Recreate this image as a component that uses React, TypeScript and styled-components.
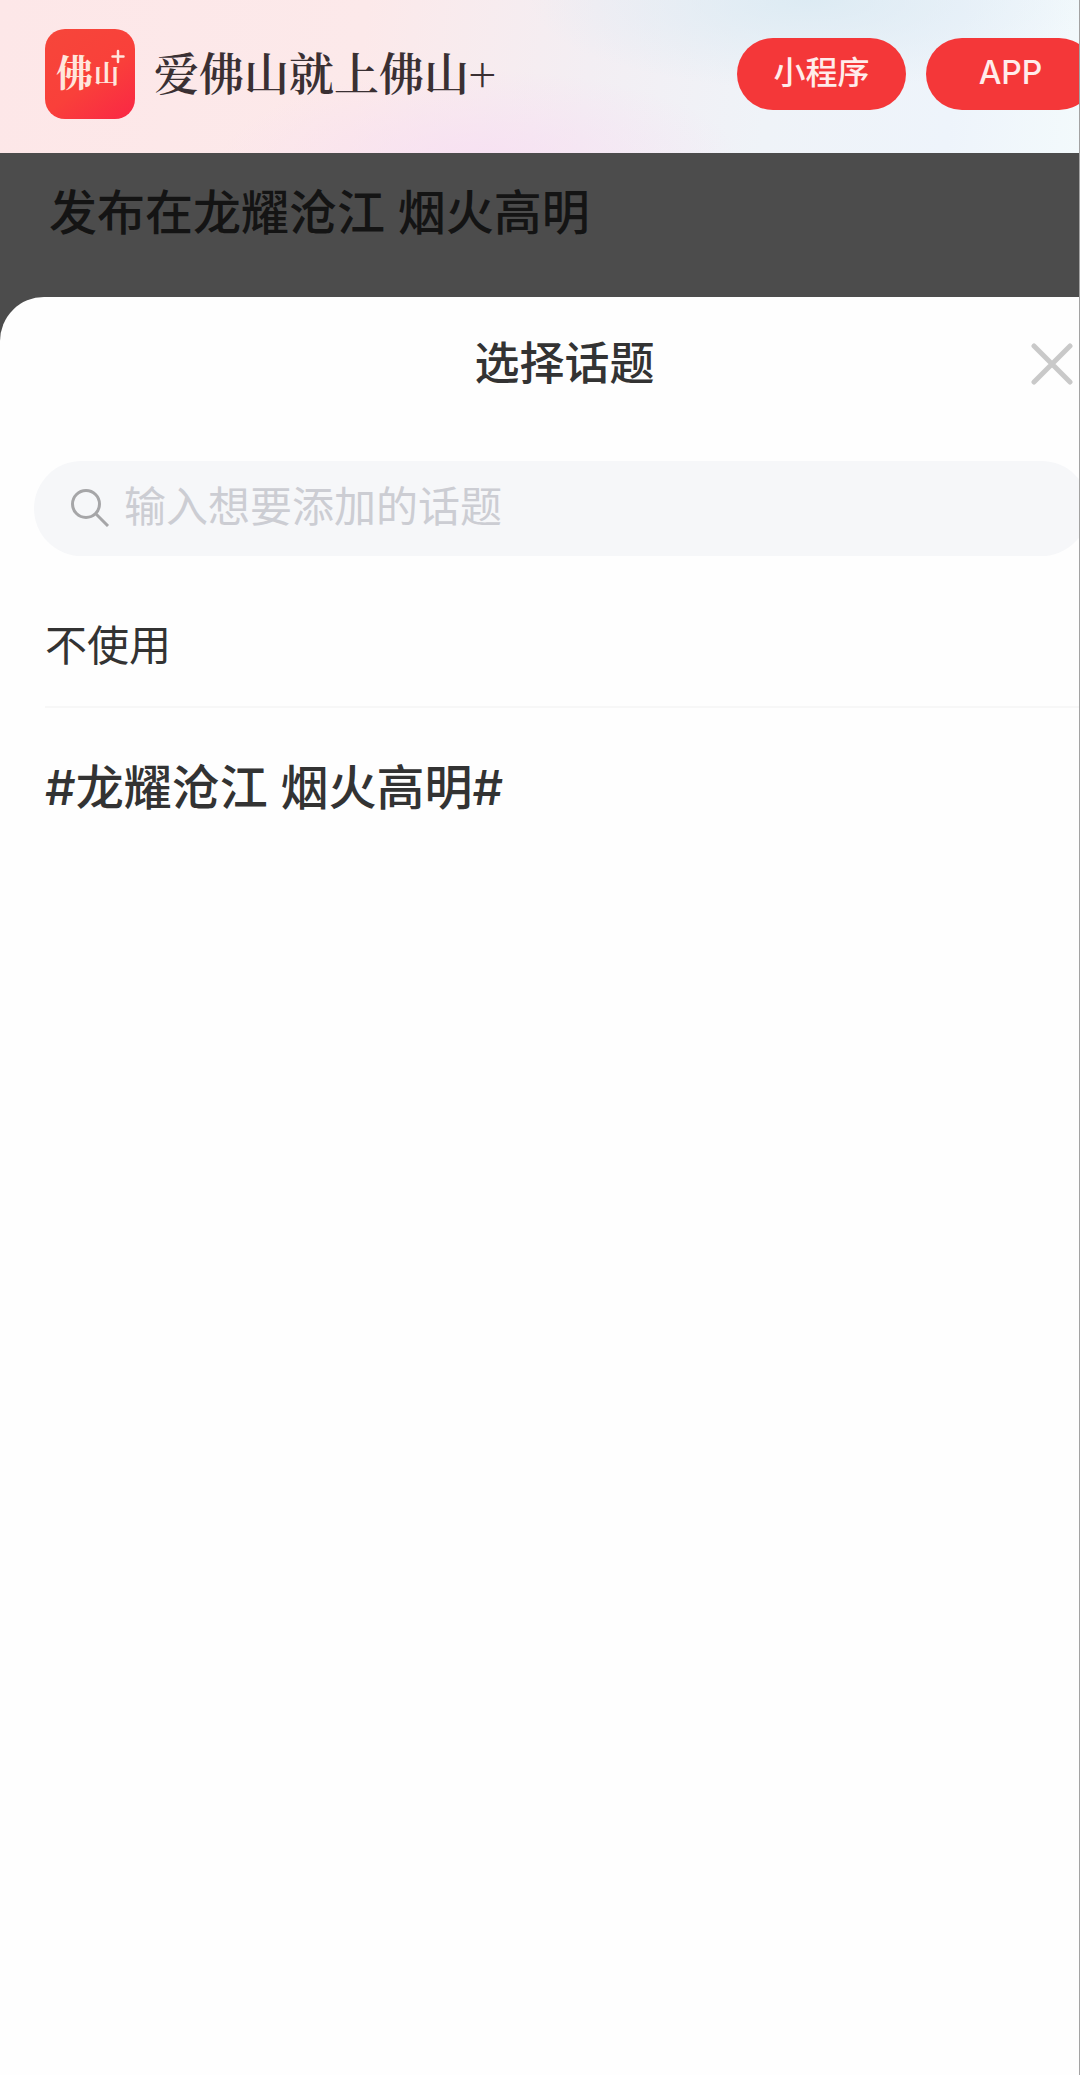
import React from "react";
import styled, { createGlobalStyle } from "styled-components";

const GlobalStyle = createGlobalStyle`
  *, *::before, *::after { box-sizing: border-box; }
  html, body { margin: 0; background: #fefefe; }
  body {
    font-family: Inter, "Noto Sans CJK SC", "Noto Sans", sans-serif;
    color: #333333;
  }
  button, input { font: inherit; }
`;

const Screen = styled.div`
  display: flex;
  flex-direction: column;
  min-height: 100vh;
  overflow: hidden;
  border-right: 1px solid #a3a3a3;
  background: #4c4c4c;
`;

/* The page is slightly wider than the visible screen and runs off its right side. */
const Page = styled.div`
  display: flex;
  flex-direction: column;
  flex: 1;
  width: calc(100% + 50px);
`;

const Banner = styled.header`
  display: flex;
  align-items: center;
  height: 153px;
  padding: 0 34px 6px 45px;
  background:
    radial-gradient(ellipse 260px 90px at 480px 160px, rgba(247, 222, 243, 0.8), rgba(247, 222, 243, 0) 100%),
    radial-gradient(ellipse 280px 90px at 810px 0, rgba(219, 234, 243, 0.9), rgba(219, 234, 243, 0) 100%),
    linear-gradient(97deg, #fde7e8 0%, #fce9ea 32%, #f3eef3 52%, #eff3f8 68%, #eef4fb 84%, #f3fafc 96%);
`;

const AppLogo = styled.span`
  display: flex;
  align-items: center;
  justify-content: center;
  width: 90px;
  height: 90px;
  border-radius: 20px;
  background: linear-gradient(145deg, #f6463a 0%, #f9403a 55%, #fa2645 100%);
`;

const Slogan = styled.span`
  margin-left: 19px;
  padding-bottom: 4px;
  font-family: "Noto Serif CJK SC", "Source Han Serif SC", "Liberation Serif", "Noto Sans CJK SC", serif;
  font-size: 45px;
  font-weight: 600;
  line-height: 64px;
  white-space: nowrap;
  color: #3a3033;
`;

const BannerActions = styled.div`
  display: flex;
  gap: 20px;
  margin-left: auto;
`;

const PillButton = styled.button`
  width: 169px;
  height: 72px;
  padding: 0 0 2px;
  border: 0;
  border-radius: 36px;
  background: #f43739;
  color: #ffeceb;
  font-size: 32px;
  font-weight: 500;
  line-height: 48px;
`;

const PublishTarget = styled.p`
  margin: 0;
  padding: 24px 49px 48px;
  font-size: 48px;
  font-weight: 500;
  line-height: 72px;
  color: #141414;
`;

const Sheet = styled.section`
  flex: 1;
  border-radius: 44px 44px 0 0;
  background: #fefefe;
`;

const SheetHeader = styled.div`
  display: grid;
  grid-template-columns: 1fr auto 1fr;
  align-items: center;
  height: 134px;
  padding: 0 54px;
`;

const SheetTitle = styled.h1`
  grid-column: 2;
  margin: 0;
  font-size: 45px;
  font-weight: 500;
  line-height: 64px;
`;

const CloseButton = styled.button`
  display: flex;
  justify-self: end;
  padding: 0;
  border: 0;
  background: none;
`;

const SearchBox = styled.label`
  display: flex;
  align-items: center;
  gap: 14px;
  height: 95px;
  margin: 30px 40px 0 34px;
  padding: 0 36px 4px;
  border-radius: 48px;
  background: #f6f7f9;
`;

const SearchInput = styled.input`
  flex: 1;
  min-width: 0;
  height: 64px;
  padding: 0;
  border: 0;
  outline: 0;
  background: none;
  color: #333333;
  font-size: 42px;
  line-height: 64px;

  &::placeholder {
    color: #cccdd3;
    opacity: 1;
  }
`;

const TopicList = styled.ul`
  margin: 0;
  padding: 28px 45px 0;
  list-style: none;
`;

const TopicItem = styled.li`
  & + & {
    border-top: 2px solid #f7f7f7;
  }
`;

const TopicButton = styled.button<{ $strong?: boolean }>`
  display: block;
  width: 100%;
  padding: ${(p) => (p.$strong ? "44px 0" : "30px 0 28px")};
  border: 0;
  background: none;
  color: #333333;
  font-size: ${(p) => (p.$strong ? "48px" : "42px")};
  font-weight: ${(p) => (p.$strong ? 500 : 400)};
  line-height: ${(p) => (p.$strong ? "72px" : "64px")};
  text-align: left;
`;

const topics = [
  { label: "不使用", strong: false },
  { label: "#龙耀沧江 烟火高明#", strong: true },
];

function LogoMark() {
  return (
    <svg width="90" height="90" viewBox="0 0 90 90" role="img" aria-label="佛山+">
      <g fill="#ffe6dc" fontFamily='"Noto Serif CJK SC", "Noto Sans CJK SC", sans-serif' fontWeight="700">
        <text x="11" y="58" fontSize="37">佛</text>
        <text x="49" y="54" fontSize="25">山</text>
      </g>
      <path d="M73 22v11M67.500 27.500h11" stroke="#ffe6dc" strokeWidth="2.500" strokeLinecap="round" />
    </svg>
  );
}

function SearchIcon() {
  return (
    <svg width="40" height="40" viewBox="0 0 40 40" fill="none" stroke="#a6a6a8" strokeWidth="3" aria-hidden="true">
      <circle cx="16" cy="17" r="13.500" />
      <path d="M25.500 26.500L38 39" />
    </svg>
  );
}

function CloseIcon() {
  return (
    <svg width="44" height="44" viewBox="0 0 44 44" fill="none" stroke="#c9c9c9" strokeWidth="5" strokeLinecap="round" aria-hidden="true">
      <path d="M3 4L39 40M39 4L3 40" />
    </svg>
  );
}

export default function App() {
  return (
    <>
      <GlobalStyle />
      <Screen>
        <Page>
          <Banner>
            <AppLogo>
              <LogoMark />
            </AppLogo>
            <Slogan>爱佛山就上佛山+</Slogan>
            <BannerActions>
              <PillButton type="button">小程序</PillButton>
              <PillButton type="button">APP</PillButton>
            </BannerActions>
          </Banner>
          <PublishTarget>发布在龙耀沧江 烟火高明</PublishTarget>
          <Sheet aria-labelledby="sheet-title">
            <SheetHeader>
              <SheetTitle id="sheet-title">选择话题</SheetTitle>
              <CloseButton type="button" aria-label="关闭">
                <CloseIcon />
              </CloseButton>
            </SheetHeader>
            <SearchBox>
              <SearchIcon />
              <SearchInput type="text" aria-label="搜索话题" placeholder="输入想要添加的话题" />
            </SearchBox>
            <TopicList>
              {topics.map((topic) => (
                <TopicItem key={topic.label}>
                  <TopicButton type="button" $strong={topic.strong}>
                    {topic.label}
                  </TopicButton>
                </TopicItem>
              ))}
            </TopicList>
          </Sheet>
        </Page>
      </Screen>
    </>
  );
}
